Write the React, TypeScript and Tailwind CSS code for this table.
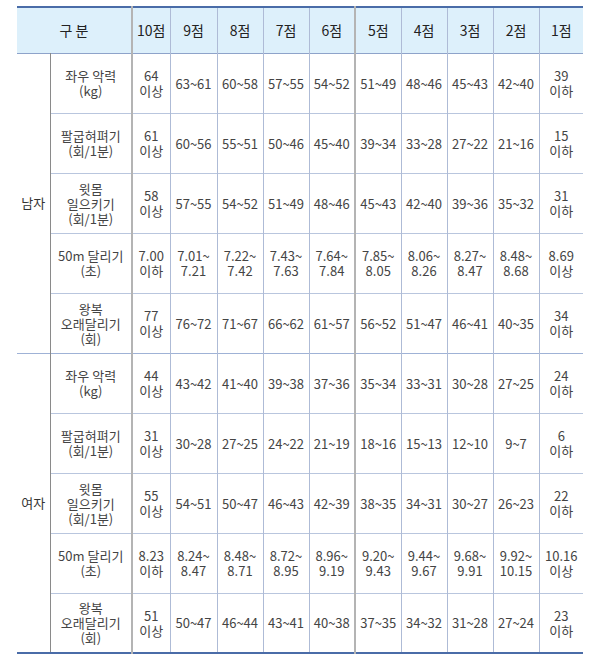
import React from "react";

type Row = { label: string[]; values: string[] };

const male: Row[] = [
    { label: ["좌우 악력", "(kg)"], values: ["64\n이상", "63~61", "60~58", "57~55", "54~52", "51~49", "48~46", "45~43", "42~40", "39\n이하"] },
    { label: ["팔굽혀펴기", "(회/1분)"], values: ["61\n이상", "60~56", "55~51", "50~46", "45~40", "39~34", "33~28", "27~22", "21~16", "15\n이하"] },
    { label: ["윗몸", "일으키기", "(회/1분)"], values: ["58\n이상", "57~55", "54~52", "51~49", "48~46", "45~43", "42~40", "39~36", "35~32", "31\n이하"] },
    { label: ["50m 달리기", "(초)"], values: ["7.00\n이하", "7.01~\n7.21", "7.22~\n7.42", "7.43~\n7.63", "7.64~\n7.84", "7.85~\n8.05", "8.06~\n8.26", "8.27~\n8.47", "8.48~\n8.68", "8.69\n이상"] },
    { label: ["왕복", "오래달리기", "(회)"], values: ["77\n이상", "76~72", "71~67", "66~62", "61~57", "56~52", "51~47", "46~41", "40~35", "34\n이하"] },
];

const female: Row[] = [
    { label: ["좌우 악력", "(kg)"], values: ["44\n이상", "43~42", "41~40", "39~38", "37~36", "35~34", "33~31", "30~28", "27~25", "24\n이하"] },
    { label: ["팔굽혀펴기", "(회/1분)"], values: ["31\n이상", "30~28", "27~25", "24~22", "21~19", "18~16", "15~13", "12~10", "9~7", "6\n이하"] },
    { label: ["윗몸", "일으키기", "(회/1분)"], values: ["55\n이상", "54~51", "50~47", "46~43", "42~39", "38~35", "34~31", "30~27", "26~23", "22\n이하"] },
    { label: ["50m 달리기", "(초)"], values: ["8.23\n이하", "8.24~\n8.47", "8.48~\n8.71", "8.72~\n8.95", "8.96~\n9.19", "9.20~\n9.43", "9.44~\n9.67", "9.68~\n9.91", "9.92~\n10.15", "10.16\n이상"] },
    { label: ["왕복", "오래달리기", "(회)"], values: ["51\n이상", "50~47", "46~44", "43~41", "40~38", "37~35", "34~32", "31~28", "27~24", "23\n이하"] },
];

const scores = ["10점", "9점", "8점", "7점", "6점", "5점", "4점", "3점", "2점", "1점"];
const widths = [38, 47, 46, 46, 46, 46, 46, 46, 46, 44];

// vertical line colour per column (left edge)
const leftBorder = (i: number) =>
    i === 0 || i === 5 ? "border-l-2 border-l-[#b4b4b4]" : "border-l border-l-[#aebbd6]";

function Group({ name, rows, first }: { name: string; rows: Row[]; first?: boolean }) {
    return (
        <>
            {rows.map((row, r) => (
                <tr
                    key={r}
                    className={
                        r === 0
                            ? first
                                ? "h-[60px]"
                                : "h-[60px] border-t border-t-[#9fb2d6]"
                            : "h-[60px] border-t border-t-[#b9c6de]"
                    }
                >
                    {r === 0 && (
                        <td rowSpan={rows.length} className="text-center align-middle text-[13px] text-[#333]">
                            {name}
                        </td>
                    )}
                    <td className="border-l border-l-[#8a8a8a] text-center align-middle text-[13px] leading-[15px] text-[#444]">
                        {row.label.map((l, k) => (
                            <div key={k}>{l}</div>
                        ))}
                    </td>
                    {row.values.map((v, i) => (
                        <td key={i} className={`${leftBorder(i)} text-center align-middle text-[13px] leading-[15px] text-[#444] whitespace-pre`}>
                            {v}
                        </td>
                    ))}
                </tr>
            ))}
        </>
    );
}

export default function App() {
    return (
        <div className="w-[600px] h-[663px] bg-white pt-[6px] pl-[17px]" style={{ fontFamily: '"Noto Sans CJK KR", "Noto Sans", sans-serif' }}>
            <table className="table-fixed border-collapse w-[566px] border-t-2 border-t-[#4a6ca8] border-b-2 border-b-[#4a6ca8]">
                <colgroup>
                    <col style={{ width: 33 }} />
                    <col style={{ width: 82 }} />
                    {widths.map((w, i) => (
                        <col key={i} style={{ width: w }} />
                    ))}
                </colgroup>
                <thead>
                    <tr className="h-[46px] bg-[#ddf0fb] border-b border-b-[#8ea3ca]">
                        <th colSpan={2} className="text-center text-[14px] font-normal text-[#222]">
                            구 분
                        </th>
                        {scores.map((s, i) => (
                            <th key={s} className={`${leftBorder(i)} text-center text-[14px] font-normal text-[#222]`}>
                                {s}
                            </th>
                        ))}
                    </tr>
                </thead>
                <tbody>
                    <Group name="남자" rows={male} first />
                    <Group name="여자" rows={female} />
                </tbody>
            </table>
        </div>
    );
}
